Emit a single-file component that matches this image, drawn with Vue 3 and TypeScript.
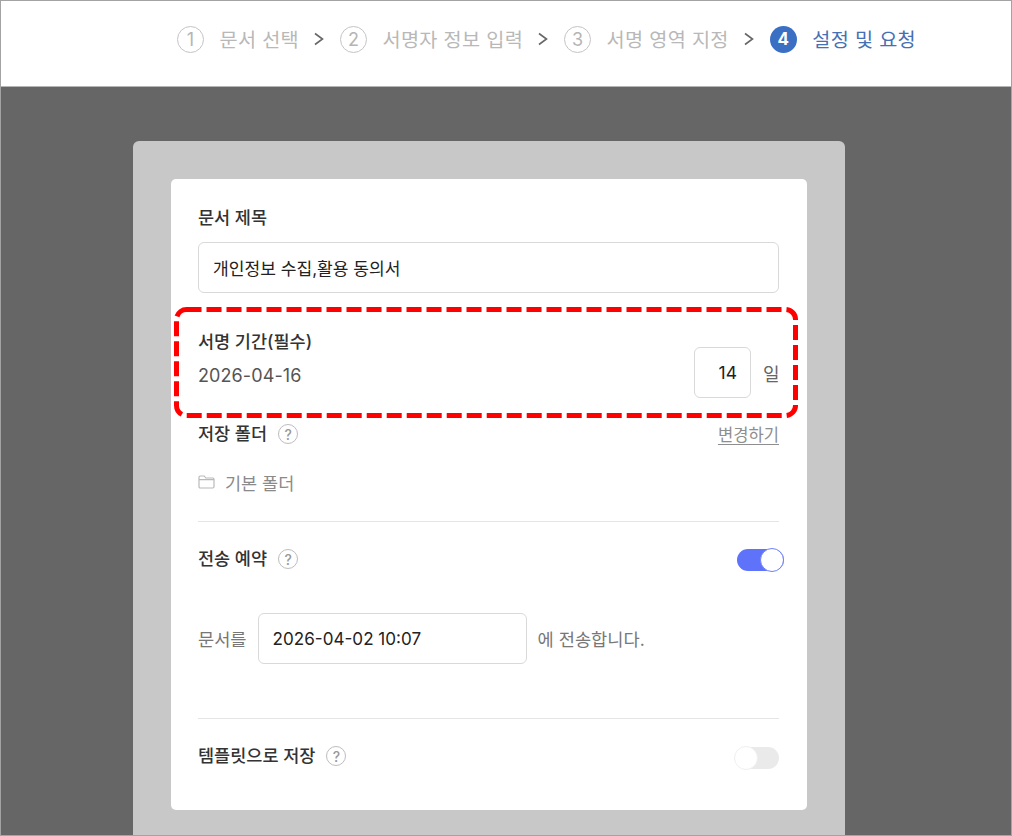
<script setup lang="ts">
const steps = [
  { n: '1', label: '문서 선택' },
  { n: '2', label: '서명자 정보 입력' },
  { n: '3', label: '서명 영역 지정' },
]
</script>

<template>
  <div class="page">
    <header class="top">
      <template v-for="s in steps" :key="s.n">
        <span class="num">{{ s.n }}</span>
        <span class="step">{{ s.label }}</span>
        <svg class="chev" width="12" height="16" viewBox="0 0 12 16" fill="none"><path d="M2 2.500 9.500 8 2 13.500" stroke="#666" stroke-width="1.600" /></svg>
      </template>
      <span class="num active">4</span>
      <span class="step current">설정 및 요청</span>
    </header>
    <main class="stage">
      <section class="panel">
        <div class="card">
          <div class="label">문서 제목</div>
          <div class="field wide">개인정보 수집,활용 동의서</div>

          <div class="period">
            <div class="period-left">
              <div class="label">서명 기간(필수)</div>
              <div class="date">2026-04-16</div>
            </div>
            <div class="days">14</div>
            <span class="il">일</span>
            <svg class="dash" width="624" height="111" viewBox="0 0 624 111" fill="none">
              <rect x="2.500" y="2.500" width="619" height="106" rx="10" stroke="#f00" stroke-width="5" stroke-dasharray="15 5" />
            </svg>
          </div>

          <div class="row folder-head">
            <span class="label">저장 폴더</span>
            <span class="help">?</span>
            <a class="change">변경하기</a>
          </div>
          <div class="folder">
            <svg width="17" height="14" viewBox="0 0 17 14" fill="none"><path d="M1 2.200C1 1.500 1.500 1 2.200 1h4l1.600 2h7c.7 0 1.200.5 1.200 1.200v7.600c0 .7-.5 1.200-1.200 1.200H2.200C1.500 13 1 12.500 1 11.800Z M1 4.600h15" stroke="#b9b9b9" stroke-width="1.200" /></svg>
            <span>기본 폴더</span>
          </div>
          <hr class="rule first" />

          <div class="row send-head">
            <span class="label">전송 예약</span>
            <span class="help">?</span>
            <span class="toggle on"><i></i></span>
          </div>
          <div class="schedule">
            <span>문서를</span>
            <div class="field when">2026-04-02 10:07</div>
            <span>에 전송합니다.</span>
          </div>
          <hr class="rule second" />

          <div class="row tpl">
            <span class="label">템플릿으로 저장</span>
            <span class="help">?</span>
            <span class="toggle off"><i></i></span>
          </div>
        </div>
      </section>
    </main>
  </div>
</template>

<style>
html, body { margin: 0; background: #fff; }
</style>

<style scoped>
.page {
  width: 1012px; height: 836px; box-sizing: border-box; overflow: hidden;
  border: 1px solid #a3a3a3; display: flex; flex-direction: column;
  font-family: Inter, "Noto Sans CJK KR", sans-serif; color: #333;
}
.top {
  height: 86px; flex: none; box-sizing: border-box; background: #fff; border-bottom: 1px solid #b5b5b5;
  display: flex; align-items: center; padding: 0 0 9px 176px; font-size: 19.700px; letter-spacing: .3px;
}
.num {
  width: 27px; height: 27px; box-sizing: border-box; border: 1.500px solid #c4c4c4; border-radius: 50%;
  display: flex; align-items: center; justify-content: center; color: #b5b5b5; font-size: 18px; letter-spacing: 0; font-weight: 400;
}
.num.active { background: #3a6fc4; border: 0; color: #fff; font-size: 17px; font-weight: 700; }
.step { margin: 0 0 2px 15.500px; color: #b8b8b8; }
.step.current { color: #4470b5; }
.chev { margin: 0 15px 0 14px; }
.stage { flex: 1; min-height: 0; background: #666; display: flex; flex-direction: column; align-items: flex-start; padding: 54px 0 0 132px; }
.panel { width: 712px; flex: 1; box-sizing: border-box; background: #c8c8c8; border-radius: 6px 6px 0 0; padding: 38px 38px 0; }
.card { width: 636px; height: 631px; box-sizing: border-box; background: #fff; border-radius: 5px; padding: 28px 27px 0; }
.label { font-size: 17.500px; font-weight: 500; line-height: 22px; color: #333; }
.field { box-sizing: border-box; height: 51px; border: 1px solid #d9d9d9; border-radius: 6px; background: #fff; display: flex; align-items: center; font-size: 17.100px; color: #222; padding-left: 14px; }
.wide { margin-top: 13px; width: 581px; }
.period { position: relative; display: flex; align-items: flex-start; margin-top: 37px; height: 67px; width: 581px; }
.period-left { flex: 1; padding-top: 1px; }
.date { margin-top: 12px; font-size: 18px; line-height: 22px; color: #555; letter-spacing: .1px; }
.days { box-sizing: border-box; width: 57px; height: 51px; border: 1px solid #d9d9d9; border-radius: 6px; display: flex; align-items: center; justify-content: flex-end; padding-right: 13px; font-size: 17.500px; color: #222; margin-top: 17px; }
.il { margin: 17px 0 0 12px; height: 51px; display: flex; align-items: center; font-size: 18px; color: #666; width: 16px; }
.dash { position: absolute; left: -24px; top: -23px; pointer-events: none; }
.row { display: flex; align-items: center; width: 581px; }
.help { margin-left: 11px; width: 20px; height: 20px; box-sizing: border-box; border: 1.500px solid #bdbdbd; border-radius: 50%; color: #999; font-size: 14px; display: flex; align-items: center; justify-content: center; font-weight: 500; }
.folder-head { margin-top: 26px; height: 22px; }
.change { margin-left: auto; font-size: 16.600px; color: #8e8e8e; text-decoration: underline; text-underline-offset: 3px; }
.folder { display: flex; align-items: center; gap: 10px; margin-top: 25px; height: 24px; font-size: 17.500px; color: #8a8a8a; }
hr.rule { border: 0; border-top: 1px solid #e5e5e5; margin: 0; width: 581px; }
.rule.first { margin-top: 27px; }
.send-head { margin-top: 26px; height: 22px; width: 586px; }
.toggle { position: relative; margin-left: auto; width: 44px; height: 22px; border-radius: 11px; background: #eaeaea; }
.toggle i { position: absolute; left: -1px; top: -1px; width: 24px; height: 24px; box-sizing: border-box; border-radius: 50%; background: #fff; border: 1.500px solid #efefef; }
.toggle.on { background: #5f73fa; width: 47px; margin-top: 2px; }
.toggle.on i { left: auto; right: 0; border-color: #6f81fb; }
.toggle.off { margin-top: 4px; }
.schedule { display: flex; align-items: center; margin-top: 43px; font-size: 17.600px; color: #777; }
.when { width: 269px; margin: 0 11px; }
.rule.second { margin-top: 54px; }
.tpl { margin-top: 26px; height: 22px; }
</style>
